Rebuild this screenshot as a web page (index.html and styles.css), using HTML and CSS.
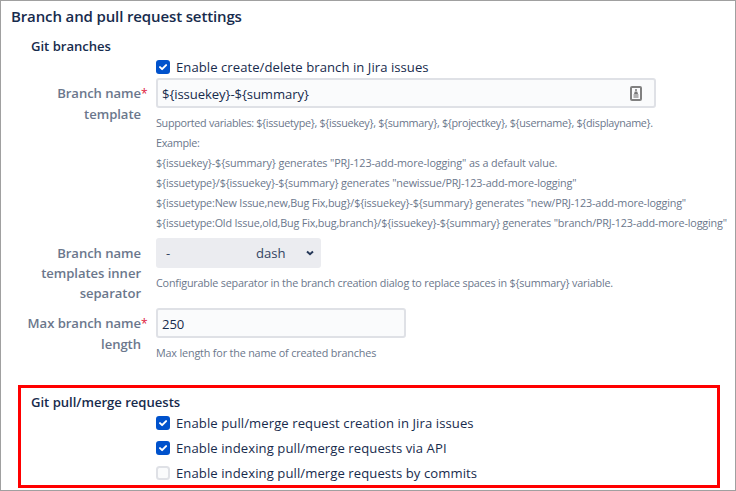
FILE: index.html
```
<!DOCTYPE html>
<html lang="en">
<head>
<meta charset="utf-8">
<title>Branch and pull request settings</title>
<link rel="stylesheet" href="styles.css">
</head>
<body>
<main class="page">
  <h1 class="title">Branch and pull request settings</h1>
  <section class="branches">
    <h2 class="subtitle">Git branches</h2>
    <label class="check first"><svg class="box" viewBox="0 0 14 14"><rect width="14" height="14" rx="3" fill="#0052cc"/><path d="M4 7.1 6.1 9.1 10.1 5.1" fill="none" stroke="#fff" stroke-width="2" stroke-linecap="round" stroke-linejoin="round"/></svg><span>Enable create/delete branch in Jira issues</span></label>
    <div class="row template">
      <div class="label">Branch name<i class="req">*</i><br>template</div>
      <div class="field">
        <div class="input wide"><span>${issuekey}-${summary}</span>
          <svg class="fill-icon" viewBox="0 0 12 16"><rect x="1" y="1" width="10" height="13" rx="1" fill="#fafbfc" stroke="#808080" stroke-width="2"/><path d="M6 3v2" stroke="#777" stroke-width="1.5"/><path d="M4 8 4.8 5.5h2.4L8 8z" fill="#777"/><path d="M3.5 9h5M3.5 11h5" stroke="#999" stroke-width="1.3"/></svg>
        </div>
        <p class="help"><span class="tight">Supported variables: ${issuetype}, ${issuekey}, ${summary}, ${projectkey}, ${username}, ${displayname}.</span><br><span class="tight">Example:</span><br><span class="loose">${issuekey}-${summary} generates "PRJ-123-add-more-logging" as a default value.</span><br>${issuetype}/${issuekey}-${summary} generates "newissue/PRJ-123-add-more-logging"<br>${issuetype:New Issue,new,Bug Fix,bug}/${issuekey}-${summary} generates "new/PRJ-123-add-more-logging"<br>${issuetype:Old Issue,old,Bug Fix,bug,branch}/${issuekey}-${summary} generates "branch/PRJ-123-add-more-logging"</p>
      </div>
    </div>
    <div class="row separator">
      <div class="label">Branch name<br>templates inner<br>separator</div>
      <div class="field">
        <div class="select"><span class="symbol">-</span><span>dash</span><svg class="chevron" viewBox="0 0 10 8"><path d="M2 2.5 5 5.2 8 2.5" fill="none" stroke="#253858" stroke-width="2"/></svg></div>
        <p class="help"><span class="snug">Configurable separator in the branch creation dialog to replace spaces in ${summary} variable.</span></p>
      </div>
    </div>
    <div class="row length">
      <div class="label">Max branch name<i class="req">*</i><br>length</div>
      <div class="field">
        <div class="input">250</div>
        <p class="help">Max length for the name of created branches</p>
      </div>
    </div>
  </section>
  <section class="requests">
    <h2 class="subtitle">Git pull/merge requests</h2>
    <label class="check"><svg class="box" viewBox="0 0 14 14"><rect width="14" height="14" rx="3" fill="#0052cc"/><path d="M4 7.1 6.1 9.1 10.1 5.1" fill="none" stroke="#fff" stroke-width="2" stroke-linecap="round" stroke-linejoin="round"/></svg><span>Enable pull/merge request creation in Jira issues</span></label>
    <label class="check"><svg class="box" viewBox="0 0 14 14"><rect width="14" height="14" rx="3" fill="#0052cc"/><path d="M4 7.1 6.1 9.1 10.1 5.1" fill="none" stroke="#fff" stroke-width="2" stroke-linecap="round" stroke-linejoin="round"/></svg><span>Enable indexing pull/merge requests via API</span></label>
    <label class="check"><svg class="box" viewBox="0 0 14 14"><rect x="1" y="1" width="12" height="12" rx="2.5" fill="#fafbfc" stroke="#dfe1e6" stroke-width="2"/></svg><span>Enable indexing pull/merge requests by commits</span></label>
  </section>
</main>
</body>
</html>
```
FILE: styles.css
```
* { box-sizing: border-box; }
body { margin: 0; background: #fff; color: #172b4d; font: 13.1px/20px "Open Sans", "Noto Sans", sans-serif; }
.page { width: 736px; height: 491px; border: 1px solid #a0a0a0; overflow: hidden; }
.title { margin: 0; padding: 5px 0 0 10px; font-size: 15px; line-height: 20px; font-weight: 550; letter-spacing: -0.13px; }
.branches { padding-top: 10px; }
.subtitle { margin: 0 0 0 30px; font-size: 13.1px; line-height: 20px; font-weight: 550; letter-spacing: -0.02px; }
.check { display: flex; align-items: center; gap: 6px; height: 25px; margin-left: 155px; letter-spacing: 0.08px; }
.check.first { height: 22px; letter-spacing: 0.05px; }
.box { width: 14px; height: 14px; flex: none; }
.row { display: grid; grid-template-columns: 140px 1fr; column-gap: 15px; white-space: nowrap; }
.template { height: 160px; }
.separator { height: 70px; }
.length { height: 77px; }
.label { padding-top: 5px; text-align: right; font-weight: 550; letter-spacing: -0.05px; color: #6b778c; }
.req { display: inline-block; width: 6px; margin-right: -6px; font-size: 12px; font-style: normal; font-weight: 400; color: #de1b3b; }
.input { display: flex; align-items: center; justify-content: space-between; width: 250px; height: 30px; padding: 2px 12px 0 4px; border: 2px solid #dfe1e6; border-radius: 3px; background: #fafbfc; letter-spacing: -0.08px; }
.wide { width: 500px; }
.fill-icon { width: 12px; height: 16px; }
.select { display: flex; align-items: center; width: 165px; height: 30px; padding: 0 6px 0 10px; border-radius: 3px; background: #ebecf0; color: #344563; }
.symbol { width: 90px; }
.chevron { width: 10px; height: 8px; margin-left: auto; }
.help { margin: 5px 0 0; font-size: 10.8px; line-height: 20px; letter-spacing: -0.17px; color: #6b778c; }
.tight { letter-spacing: -0.307px; }
.snug { letter-spacing: -0.2px; }
.loose { letter-spacing: -0.123px; }
.requests { width: 702px; height: 103px; margin-left: 17px; border: 3px solid #f00; padding-top: 4px; }
.requests .subtitle { margin: 0 0 -2px 10px; }
.requests .check { margin-left: 135px; }
```
